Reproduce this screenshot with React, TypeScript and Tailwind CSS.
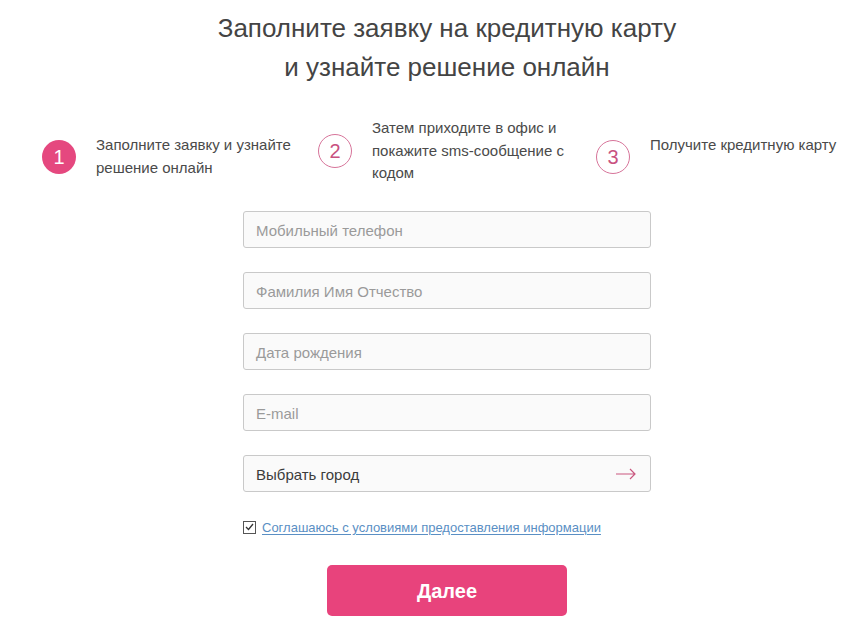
const font = { fontFamily: '"Liberation Sans", Arial, sans-serif' };

function Step({ n, active, children, className = '' }: { n: number; active?: boolean; children: React.ReactNode; className?: string }) {
    return (
        <div className={`flex items-center gap-5 ${className}`}>
            <div
                className={`w-[34px] h-[34px] shrink-0 rounded-full flex items-center justify-center text-[20px] ${
                    active ? 'bg-[#e5487f] text-white' : 'border border-[#d7749a] text-[#c8517f]'
                }`}
            >
                {n}
            </div>
            <div className="text-[15px] leading-[22.5px] text-[#4a4a4a] whitespace-nowrap">{children}</div>
        </div>
    );
}

function Field({ placeholder, filled }: { placeholder: string; filled?: boolean }) {
    return (
        <div className="h-[37px] w-[408px] rounded-[3px] border border-[#c9c9c9] bg-[#fafafa] flex items-center px-3 pt-[4px]">
            <span className={`text-[15px] ${filled ? 'text-[#3c3c3c]' : 'text-[#9a9a9a]'}`}>{placeholder}</span>
            {filled && (
                <svg className="ml-auto mr-[1px] -mt-[3px]" width="22" height="12" viewBox="0 0 22 12" fill="none" stroke="#c9577f" strokeWidth="1.2">
                    <path d="M1 6h19M15 1l5 5-5 5" />
                </svg>
            )}
        </div>
    );
}

export default function App() {
    return (
        <div className="w-[858px] h-[626px] bg-white overflow-hidden" style={font}>
            <div className="pl-[36px] pt-[9px] text-center text-[26px] leading-[39px] text-[#444]">
                <p>Заполните заявку на кредитную карту</p>
                <p>и узнайте решение онлайн</p>
            </div>

            <div className="flex items-start pl-[42px] mt-[30px]">
                <Step n={1} active className="w-[276px] mt-[17px]">
                    Заполните заявку и узнайте<br />решение онлайн
                </Step>
                <Step n={2} className="w-[278px]">
                    Затем приходите в офис и<br />покажите sms-сообщение с<br />кодом
                </Step>
                <Step n={3} className="flex-1 mt-[17px]">
                    Получите кредитную карту<br />&nbsp;
                </Step>
            </div>

            <div className="pl-[36px] mt-[26px] flex flex-col items-center">
                <div className="flex flex-col gap-[24px]">
                    <Field placeholder="Мобильный телефон" />
                    <Field placeholder="Фамилия Имя Отчество" />
                    <Field placeholder="Дата рождения" />
                    <Field placeholder="E-mail" />
                    <Field placeholder="Выбрать город" filled />
                </div>

                <div className="w-[408px] mt-[26px] flex items-center gap-[6px]">
                    <span className="w-[13px] h-[13px] border border-[#555] bg-white flex items-center justify-center">
                        <svg width="9" height="8" viewBox="0 0 9 8" fill="none" stroke="#333" strokeWidth="1.3">
                            <path d="M1 4l2.5 2.5L8 1" />
                        </svg>
                    </span>
                    <a className="text-[13px] text-[#5a8fc4] underline underline-offset-2">
                        Соглашаюсь с условиями предоставления информации
                    </a>
                </div>

                <button className="mt-[28px] w-[240px] h-[51px] rounded-[5px] bg-[#e8437c] text-white text-[20px] font-bold">
                    Далее
                </button>
            </div>
        </div>
    );
}
